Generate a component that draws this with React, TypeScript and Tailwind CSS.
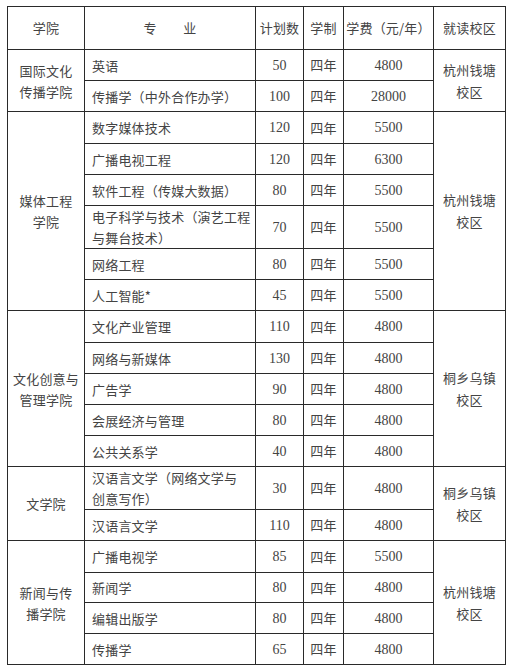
import React from 'react';

type Major = { name: React.ReactNode; plan: number; fee: number; tall?: boolean; h?: number };
type Group = { college: string[]; campus: string[]; majors: Major[] };

const groups: Group[] = [
  {
    college: ['国际文化', '传播学院'],
    campus: ['杭州钱塘', '校区'],
    majors: [
      { name: '英语', plan: 50, fee: 4800 },
      { name: '传播学（中外合作办学）', plan: 100, fee: 28000 },
    ],
  },
  {
    college: ['媒体工程', '学院'],
    campus: ['杭州钱塘', '校区'],
    majors: [
      { name: '数字媒体技术', plan: 120, fee: 5500, h: 32 },
      { name: '广播电视工程', plan: 120, fee: 6300 },
      { name: '软件工程（传媒大数据）', plan: 80, fee: 5500 },
      { name: <>电子科学与技术（演艺工程<br />与舞台技术）</>, plan: 70, fee: 5500, tall: true },
      { name: '网络工程', plan: 80, fee: 5500 },
      { name: '人工智能*', plan: 45, fee: 5500 },
    ],
  },
  {
    college: ['文化创意与', '管理学院'],
    campus: ['桐乡乌镇', '校区'],
    majors: [
      { name: '文化产业管理', plan: 110, fee: 4800, h: 32 },
      { name: '网络与新媒体', plan: 130, fee: 4800 },
      { name: '广告学', plan: 90, fee: 4800 },
      { name: '会展经济与管理', plan: 80, fee: 4800 },
      { name: '公共关系学', plan: 40, fee: 4800 },
    ],
  },
  {
    college: ['文学院'],
    campus: ['桐乡乌镇', '校区'],
    majors: [
      { name: <>汉语言文学（网络文学与<br />创意写作）</>, plan: 30, fee: 4800, tall: true },
      { name: '汉语言文学', plan: 110, fee: 4800 },
    ],
  },
  {
    college: ['新闻与传', '播学院'],
    campus: ['杭州钱塘', '校区'],
    majors: [
      { name: '广播电视学', plan: 85, fee: 5500, h: 32 },
      { name: '新闻学', plan: 80, fee: 4800, h: 30 },
      { name: '编辑出版学', plan: 80, fee: 4800 },
      { name: '传播学', plan: 65, fee: 4800 },
    ],
  },
];

const cell = 'border border-[#2a2a2a] p-0 align-middle';
const num = "font-['Liberation_Serif',serif] text-[14px] text-center tracking-normal";

export default function App() {
  return (
    <div className="min-h-screen bg-white pl-[7px] pt-[6px] text-[13px] text-[#444] tracking-[0.2px] font-['Noto_Sans_CJK_SC',sans-serif]">
      <table className="table-fixed border-collapse border-[1.5px] border-[#666] w-[498px]">
        <colgroup>
          <col className="w-[77px]" />
          <col className="w-[171px]" />
          <col className="w-[48px]" />
          <col className="w-[40px]" />
          <col className="w-[90px]" />
          <col className="w-[72px]" />
        </colgroup>
        <thead>
          <tr className="h-[43px]">
            <th className={`${cell} font-normal text-center`}>学院</th>
            <th className={`${cell} font-normal text-center whitespace-pre`}>专　　业</th>
            <th className={`${cell} font-normal text-center`}>计划数</th>
            <th className={`${cell} font-normal text-center`}>学制</th>
            <th className={`${cell} font-normal text-center`}>学费（元/年）</th>
            <th className={`${cell} font-normal text-center`}>就读校区</th>
          </tr>
        </thead>
        <tbody>
          {groups.map((g, gi) =>
            g.majors.map((m, mi) => (
              <tr key={`${gi}-${mi}`} style={{ height: m.tall ? 43 : m.h ?? 31 }}>
                {mi === 0 && (
                  <td rowSpan={g.majors.length} className={`${cell} text-center leading-[21px]`}>
                    {g.college.map((l) => (
                      <div key={l}>{l}</div>
                    ))}
                  </td>
                )}
                <td className={`${cell} pl-[7px] leading-[21px]`}>{m.name}</td>
                <td className={`${cell} ${num}`}>{m.plan}</td>
                <td className={`${cell} text-center`}>四年</td>
                <td className={`${cell} ${num}`}>{m.fee}</td>
                {mi === 0 && (
                  <td rowSpan={g.majors.length} className={`${cell} text-center leading-[22px]`}>
                    {g.campus.map((l) => (
                      <div key={l}>{l}</div>
                    ))}
                  </td>
                )}
              </tr>
            ))
          )}
        </tbody>
      </table>
    </div>
  );
}
